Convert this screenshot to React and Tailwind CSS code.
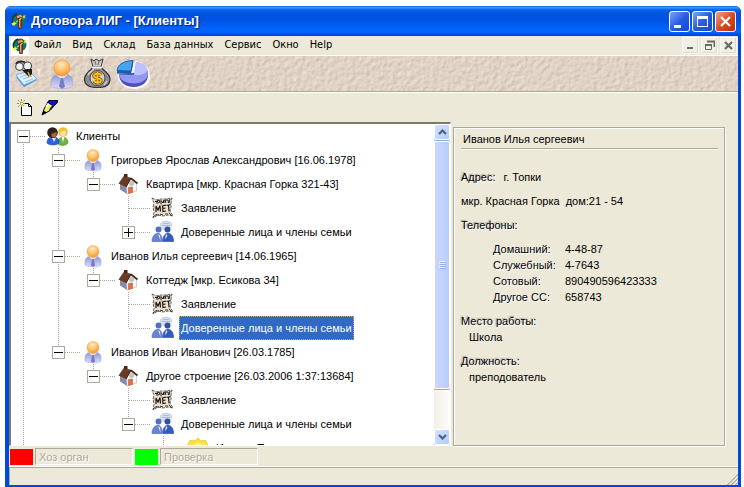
import clsx from "clsx"

const menuItems = ["Файл", "Вид", "Склад", "База данных", "Сервис", "Окно", "Help"]

const tree = [
  {
    id: "root",
    label: "Клиенты",
    icon: "clients",
    more: true,
    children: [
      {
        id: "c1",
        label: "Григорьев Ярослав Александрович [16.06.1978]",
        icon: "person",
        children: [
          {
            id: "c1-1",
            label: "Квартира [мкр. Красная Горка 321-43]",
            icon: "house",
            children: [
              { id: "c1-1-1", label: "Заявление", icon: "paper" },
              { id: "c1-1-2", label: "Доверенные лица и члены семьи", icon: "family", collapsed: true },
            ],
          },
        ],
      },
      {
        id: "c2",
        label: "Иванов Илья сергеевич [14.06.1965]",
        icon: "person",
        children: [
          {
            id: "c2-1",
            label: "Коттедж [мкр. Есикова 34]",
            icon: "house",
            children: [
              { id: "c2-1-1", label: "Заявление", icon: "paper" },
              { id: "c2-1-2", label: "Доверенные лица и члены семьи", icon: "family", selected: true },
            ],
          },
        ],
      },
      {
        id: "c3",
        label: "Иванов Иван Иванович [26.03.1785]",
        icon: "person",
        children: [
          {
            id: "c3-1",
            label: "Другое строение [26.03.2006 1:37:13684]",
            icon: "house",
            children: [
              { id: "c3-1-1", label: "Заявление", icon: "paper" },
              {
                id: "c3-1-2",
                label: "Доверенные лица и члены семьи",
                icon: "family",
                children: [{ id: "c3-1-2-1", label: "Иванов Петр", icon: "star" }],
              },
            ],
          },
        ],
      },
    ],
  },
]

const phones = [
  ["Домашний:", "4-48-87"],
  ["Служебный:", "4-7643"],
  ["Сотовый:", "890490596423333"],
  ["Другое СС:", "658743"],
]

/* ---------- icons ---------- */

function AppIcon() {
  return (
    <svg width="16" height="16" viewBox="0 0 16 16">
      <circle cx="8" cy="7" r="6.500" fill="#0b7a68" />
      <path d="M2 10 A6.500 6.500 0 0 1 6 1" stroke="#043c34" strokeWidth="1.500" fill="none" />
      <path d="M5 3 L10 1 L12 4 L6 6 Z" fill="#d9a07a" stroke="#4a2410" strokeWidth=".7" />
      <path d="M7.500 5h3v10.500h-3z" fill="#c0522c" stroke="#4a1c0c" strokeWidth=".7" />
      <path d="M8.500 6v8" stroke="#f2b08c" strokeWidth=".8" />
      <path d="M1 12 L15 2" stroke="#ffe93c" strokeWidth="1" strokeDasharray="3 1.500" />
      <path d="M3 8l1 2 2 .5-2 1-1 2-.8-2-2-1 2-.5z" fill="#fff04a" />
      <path d="M13 2l.6 1.500 1.600.5-1.600.6-.6 1.500-.6-1.500-1.500-.6 1.500-.5z" fill="#c8f04a" />
    </svg>
  )
}

function PersonIcon({ size = 24 }) {
  return (
    <svg width={size} height={size} viewBox="0 0 24 24">
      <defs>
        <radialGradient id="head" cx="45%" cy="28%" r="75%">
          <stop offset="0" stopColor="#ffe9c4" />
          <stop offset=".55" stopColor="#ffbe66" />
          <stop offset="1" stopColor="#f5942c" />
        </radialGradient>
        <linearGradient id="body" x1="0" y1="0" x2="0" y2="1">
          <stop offset="0" stopColor="#8d94cc" />
          <stop offset="1" stopColor="#dadef6" />
        </linearGradient>
      </defs>
      <path d="M4 21 C3 14 6 12 12 12 C18 12 21 14 20 21 C18 23.500 6 23.500 4 21Z" fill="url(#body)" stroke="#a4aade" strokeWidth=".5" />
      <path d="M8 13l4 3 4-3-1-1H9z" fill="#e2e5fb" />
      <path d="M11.200 15h1.600l1.400 6.500L12 23 9.800 21.500z" fill="#737cc4" />
      <circle cx="12" cy="7.500" r="6" fill="url(#head)" stroke="#ee9a3a" strokeWidth=".5" />
    </svg>
  )
}

function HouseIcon() {
  return (
    <svg width="24" height="24" viewBox="0 0 24 24">
      <path d="M4 11 L11 14 L11 22 L4 17.500Z" fill="#858cab" />
      <path d="M10.500 14 L15.500 7 L20.500 11.500 L20.500 19 L11 22Z" fill="#f4f5fb" stroke="#a7abc0" strokeWidth=".5" />
      <path d="M2.500 11.500 L8 3.500 L15 6 L10 15Z" fill="#6b3a22" />
      <path d="M8 2h3.500v3H8z" fill="#4f2512" />
      <path d="M14.500 6 L21.500 11.500" stroke="#4f2512" strokeWidth="1.600" />
      <path d="M15 6 L10 15" stroke="#3d1b0c" strokeWidth="1" />
      <circle cx="15.500" cy="11.500" r="2" fill="#b9d3b0" stroke="#8893a8" strokeWidth=".5" />
      <path d="M12.500 15.500l4-.5v5.500l-4 1z" fill="#e2703a" stroke="#b34c1e" strokeWidth=".5" />
    </svg>
  )
}

function PaperIcon() {
  return (
    <svg width="24" height="24" viewBox="0 0 24 24">
      <path d="M1 2l4 2 5-1 5 0 6-1-1 5 0 4-1 4 3 5-5-1-5 1-5-1-5 3 1-6-1-5 1-4z" fill="#ece2d2" stroke="#2a2620" strokeWidth=".7" strokeDasharray="3 1" />
      <path d="M4 5.500h3M6 8V5l2-1 1 2-2 1M10 8V4.500l2 2.500 1-3v3M15 7l-1-3 3 0 .5 3M19 3l-1 4" stroke="#1a1714" strokeWidth="1" fill="none" />
      <path d="M5 16l0-6 2 4 2-4.500.5 6M15 9l-3.500 1 .5 5.500 3-.5M11.500 12.500l3-.5M15.500 9.500l4-1M17.500 9l.5 6" stroke="#1a1714" strokeWidth="1.200" fill="none" />
      <path d="M2 21l4-3M5 19h3M9 18l3 1M14 18h3M18 17l3 3" stroke="#3a342a" strokeWidth="1" />
      <path d="M3 10v3M9 9h3M17 16h2" stroke="#b79a80" strokeWidth="1.200" />
    </svg>
  )
}

function FamilyIcon() {
  return (
    <svg width="24" height="24" viewBox="0 0 24 24">
      <ellipse cx="15" cy="5" rx="6" ry="3.800" fill="#d8e2ee" stroke="#b2c2d4" strokeWidth=".7" />
      <path d="M13 8l-2 3 5-2.500z" fill="#cfdcec" />
      <path d="M12 3.500h6M11 5.500h8" stroke="#9fb4cc" strokeWidth=".8" />
      <path d="M1 21.500 C1 17 3 14 7 13 C10 14 11.500 17 11.500 21.500Z" fill="#6684cf" stroke="#4764b4" strokeWidth=".6" />
      <path d="M12 21.500 C12 17 13 14 17 13 C21 14 22.500 17 22.500 21.500Z" fill="#3459c0" stroke="#2344a0" strokeWidth=".6" />
      <path d="M7 14l2 1.500.5 5zM15 14l-1 5.500 2.500-4z" fill="#e8eefc" />
      <circle cx="7.500" cy="9.500" r="3" fill="#5271bf" />
      <circle cx="16.500" cy="9.500" r="3" fill="#31529f" />
    </svg>
  )
}

function ClientsIcon() {
  return (
    <svg width="24" height="24" viewBox="0 0 24 24">
      <path d="M12 20c0-5 2-7 5-7s5 3 5 6c-2 3-8 3-10 1z" fill="#6db53c" stroke="#4c8a24" strokeWidth=".6" />
      <path d="M15.500 13l1.500 5 1.500-5z" fill="#fff" />
      <circle cx="17" cy="8" r="4.800" fill="#efc235" />
      <path d="M14 8.500c2-1 4-2 6-1.500 0 3-1 5.500-2.500 5.500S14 11 14 8.500z" fill="#fbdcae" />
      <path d="M1 19c0-4 2-6 6-6s6.500 2 6 6c-2 2.500-10 2.500-12 0z" fill="#2f62dd" stroke="#173ea8" strokeWidth=".6" />
      <path d="M6 14l2 4 2-4z" fill="#dfe9ff" />
      <circle cx="6.500" cy="8.500" r="5.300" fill="#2c201c" />
      <path d="M5.500 9.500c2 0 4-1 4.500-2 1.500 3 .5 6-2 6S5 12 5.500 9.500z" fill="#b5602f" />
    </svg>
  )
}

function StarIcon() {
  return (
    <svg width="24" height="24" viewBox="0 0 24 24">
      <path d="M12 2l2.500 3 5-.5 2 4 2 3.500-3 3-1 5-5-1-2.500 3-3-3-5 1-1-5-3-3 2-3.500 2-4 5 .5z" fill="#ffe53a" stroke="#e8b91c" strokeWidth=".8" />
      <circle cx="12" cy="12" r="5" fill="#fff3a0" />
    </svg>
  )
}

const nodeIcons = {
  clients: ClientsIcon,
  person: PersonIcon,
  house: HouseIcon,
  paper: PaperIcon,
  family: FamilyIcon,
  star: StarIcon,
}

function ReportIcon() {
  return (
    <svg width="32" height="32" viewBox="0 0 32 32">
      <path d="M5 19l13-3 8 6-13 7z" fill="#3f92e2" />
      <path d="M5 17l13-4 8 8-13 6z" fill="#e2f2ff" stroke="#79b6ee" strokeWidth="1" />
      <path d="M9 19l9-3M12 21l9-3M14 24l8-3" stroke="#8ac2f0" strokeWidth="1" />
      <circle cx="8.500" cy="8.500" r="3.800" fill="#f2f4f5" stroke="#4a4a4a" strokeWidth="1.200" />
      <path d="M5 6c2-4 8-3 11 0" stroke="#2c2c2c" strokeWidth="1.600" fill="none" />
      <circle cx="16.500" cy="8" r="4" fill="#eceff0" stroke="#4c4c4c" strokeWidth="1.200" />
      <path d="M11 12l6-1 4 0 0 5-3 3-5-5z" fill="#1e1e1e" />
      <path d="M17 14l2 5" stroke="#e8ad2e" strokeWidth="1.500" />
      <path d="M26 12l2-1v6" stroke="#fff" strokeWidth="1" fill="none" />
    </svg>
  )
}

function MoneyIcon() {
  return (
    <svg width="32" height="32" viewBox="0 0 32 32">
      <path d="M10 1l3 2 2-2 3 2 4-2-2 8h-8z" fill="#c9c9c9" stroke="#3c3c3c" strokeWidth="1" />
      <path d="M14 3l1 4M18 3l-1 4" stroke="#555" strokeWidth=".8" />
      <path d="M12 9h8c1 3 9 6 9 12 0 6-4 8.500-12.500 8.500S3.500 27 3.500 21c0-6 7.500-9 8.500-12z" fill="#8d8d8d" stroke="#333" strokeWidth="1.200" />
      <path d="M7 17c1-3 4-4 6-6M26 23c-1 2-2 3-3 4" stroke="#d0d0d0" strokeWidth="1.500" fill="none" />
      <path d="M11 9.500h10" stroke="#f0f0f0" strokeWidth="2" />
      <circle cx="16.500" cy="20" r="7.500" fill="#d6d2c4" stroke="#444" strokeWidth="1" />
      <path d="M20 17c-1-2-7-2-7 .8s7 2 7 4.700-6 2.500-7 .5M16.500 13.500v13" stroke="#7a4a00" strokeWidth="3.400" fill="none" />
      <path d="M20 17c-1-2-7-2-7 .8s7 2 7 4.700-6 2.500-7 .5M16.500 14v12" stroke="#ffc21c" strokeWidth="1.800" fill="none" />
    </svg>
  )
}

function PieIcon() {
  return (
    <svg width="34" height="32" viewBox="0 0 34 32">
      <path d="M2 17c2 9 8 13 17 13s14-5 14-12-5-13-14-14" fill="#fff" stroke="#fff" strokeWidth="2" opacity=".8" />
      <path d="M3 16c0 9 7 13 15 13s14-5 14-12v-3z" fill="#4d52b4" />
      <path d="M18 17L20 4c8 1 12 6 12 11 0 6-6 10.500-14 10.500S3.500 22 3 16.500z" fill="#9298f2" />
      <path d="M18 17L20 4c7 1 10.500 4.500 11.500 8-3 5-8 5.500-13.500 5z" fill="#bcc1ff" />
      <path d="M1 12.500C2 6 8 3 17 2.500L15 13z" fill="#45a4f0" stroke="#1d5fae" strokeWidth="1" />
      <path d="M1 12.500l14 .5v3L1 15.500z" fill="#1b5cb0" />
      <path d="M15 13l2-10.500v4L15 16z" fill="#174f9c" />
    </svg>
  )
}

function NewIcon() {
  return (
    <svg width="16" height="18" viewBox="0 0 16 18">
      <path d="M4.500 4.500h7l3 3v9h-10z" fill="#fff" stroke="#000" />
      <path d="M11.500 4.500v3h3" fill="none" stroke="#000" />
      <path d="M0 0h8v8H0z" fill="#ece9d8" />
      <path d="M4.500 9v7" stroke="#000" />
      <path d="M4.500 0v8M0 4.500h9M1 1l6 6M8 1l-7 7" stroke="#8f8f50" strokeWidth="1" strokeDasharray="2 1" />
      <circle cx="4.500" cy="4.500" r="1" fill="#ffff60" />
    </svg>
  )
}

function EditIcon() {
  return (
    <svg width="18" height="18" viewBox="0 0 18 18">
      <path d="M8 1.500h8.500V3L9 11.500l-8 4.500L3.500 9z" fill="#f6f06c" stroke="#000" strokeWidth="1" />
      <path d="M8 1.500h8.500V3L13 7 6.500 3.500z" fill="#1414b0" stroke="#00004c" strokeWidth="1" />
      <path d="M7.500 4.500L5 8" stroke="#fff" strokeWidth="1.500" />
      <path d="M9.500 11L13 7l-1.500-1L8 10.500z" fill="#1a1a66" />
      <path d="M1 16l1.500-4.500 3.500 2z" fill="#000" />
    </svg>
  )
}

const toolbar = [
  { name: "Отчёты", Icon: ReportIcon },
  { name: "Клиенты", Icon: () => <PersonIcon size={32} /> },
  { name: "Платежи", Icon: MoneyIcon },
  { name: "Диаграмма", Icon: PieIcon },
]

/* ---------- window chrome ---------- */

function CaptionButton({ name, close, children }) {
  return (
    <button
      aria-label={name}
      className={clsx(
        "flex h-[21px] w-[21px] items-center justify-center rounded-[3px] border border-white",
        close
          ? "bg-linear-to-br from-[#f0a088] via-[#dd4a20] to-[#b8300a]"
          : "bg-linear-to-br from-[#7ea2f4] via-[#2a5be6] to-[#1a45c8]"
      )}
    >
      <svg width="19" height="19" viewBox="0 0 19 19" shapeRendering={close ? "auto" : "crispEdges"} stroke="#fff" fill="none">
        {children}
      </svg>
    </button>
  )
}

function ChildButton({ name, children }) {
  return (
    <button aria-label={name} className="flex h-[17px] w-[17px] items-center justify-center border border-[#f8f7f0] bg-[#f1f0e6] shadow-[inset_-1px_-1px_0_#dcdacb]">
      <svg width="11" height="11" viewBox="0 0 11 11" stroke="#6b6b60" fill="none">
        {children}
      </svg>
    </button>
  )
}

function TitleBar() {
  return (
    <header className="flex h-[30px] shrink-0 items-center gap-1 rounded-t-[6px] bg-[linear-gradient(#0a4fd8_0px,#3f97ff_1px,#2f8bf8_2px,#0a5fe8_4px,#0053e1_8px,#0054e6_15px,#0062fb_22px,#0066ff_26px,#0055e8_28px,#003dc4_30px)] pr-[5px] pl-1.5">
      <AppIcon />
      <h1 className="grow truncate font-['Liberation_Sans',Arial,sans-serif] text-[13px] font-bold text-white [text-shadow:1px_1px_1px_#0a1e78]">
        Договора ЛИГ - [Клиенты]
      </h1>
      <div className="flex gap-0.5">
        <CaptionButton name="Свернуть">
          <path d="M4 14h7" strokeWidth="3" />
        </CaptionButton>
        <CaptionButton name="Развернуть">
          <path d="M4 5.500h11" strokeWidth="3" />
          <path d="M4.500 5v9.500h10V5" />
        </CaptionButton>
        <CaptionButton name="Закрыть" close>
          <path d="M5 5l9 9M14 5l-9 9" strokeWidth="2.200" />
        </CaptionButton>
      </div>
    </header>
  )
}

function MenuBar() {
  return (
    <nav className="flex h-[19px] shrink-0 items-center bg-[#ece9d8] pl-0.5 font-['DejaVu_Sans_Condensed','DejaVu_Sans',sans-serif] text-[11px]">
      <span className="mr-[5px] flex h-[18px] w-[18px] items-center justify-center bg-white">
        <AppIcon />
      </span>
      <div className="flex grow gap-[11px]">
        {menuItems.map((item) => (
          <button key={item}>{item}</button>
        ))}
      </div>
      <div className="flex gap-0.5 pr-px">
        <ChildButton name="Свернуть окно">
          <path d="M2 8h6" strokeWidth="2" />
        </ChildButton>
        <ChildButton name="Восстановить окно">
          <path d="M3 1.500h7.500V7M1 5h7" strokeWidth="2" />
          <path d="M1.500 4v5.500h6V4" />
        </ChildButton>
        <ChildButton name="Закрыть окно">
          <path d="M2 2l7 7M9 2l-7 7" strokeWidth="2.200" />
        </ChildButton>
      </div>
    </nav>
  )
}

function StoneTexture() {
  return (
    <svg className="absolute inset-0 h-full w-full opacity-45" aria-hidden="true">
      <filter id="stone" x="0" y="0" width="100%" height="100%" colorInterpolationFilters="sRGB">
        <feTurbulence type="fractalNoise" baseFrequency="0.22" numOctaves="3" seed="4" result="n" />
        <feDiffuseLighting in="n" lightingColor="#e2d4c6" surfaceScale="0.700" diffuseConstant="1.200">
          <feDistantLight azimuth="225" elevation="56" />
        </feDiffuseLighting>
      </filter>
      <rect width="100%" height="100%" filter="url(#stone)" />
    </svg>
  )
}

/* ---------- tree ---------- */

// one 35px column of the tree: vertical guide (top / bottom half) and the branch to the icon
function Guide({ top, bottom, branch }) {
  return (
    <svg width="35" height="24" viewBox="0 0 35 24" className="shrink-0" shapeRendering="crispEdges" stroke="#aca899" strokeDasharray="1 1">
      {top && <path d="M12.500 0v12" />}
      {bottom && <path d="M12.500 12v12" />}
      {branch && <path d="M13 12.500h22" />}
    </svg>
  )
}

function TreeNode({ node, guides, last }) {
  const Icon = nodeIcons[node.icon]
  const depth = guides.length
  const hasBox = node.children || node.collapsed
  return (
    <li>
      <div className="flex h-6 items-center whitespace-nowrap">
        {guides.map((g, i) => (
          <Guide key={i} top={g} bottom={g} />
        ))}
        <div className="relative shrink-0">
          <Guide top={depth > 0} bottom={!last} branch />
          {hasBox && (
            <button
              aria-label={node.collapsed ? "Раскрыть" : "Скрыть"}
              className="absolute top-1.5 left-1.5 flex h-[13px] w-[13px] items-center justify-center border border-[#aca899] bg-white"
            >
              <svg width="9" height="9" viewBox="0 0 9 9" stroke="#000" shapeRendering="crispEdges">
                <path d={node.collapsed ? "M0 4.500h9M4.500 0v9" : "M0 4.500h9"} />
              </svg>
            </button>
          )}
        </div>
        <span className="shrink-0">
          <Icon />
        </span>
        <span
          className={clsx(
            "ml-1 h-6 px-0.5 leading-6",
            node.selected && "bg-[#316ac5] text-white outline-1 -outline-offset-1 outline-dotted outline-[#d9a441]"
          )}
        >
          {node.label}
        </span>
      </div>
      {node.children && (
        <ul>
          {node.children.map((child, i) => (
            <TreeNode key={child.id} node={child} guides={[...guides, !last]} last={i === node.children.length - 1} />
          ))}
        </ul>
      )}
    </li>
  )
}

function ScrollButton({ name, d }) {
  return (
    <button aria-label={name} className="flex h-4 w-4 shrink-0 items-center justify-center rounded-[2px] border border-white bg-linear-to-br from-[#d6e2fe] to-[#b4cbfb] shadow-[0_1px_0_#8aa8de]">
      <svg width="9" height="8" viewBox="0 0 9 8" fill="none" stroke="#4d6185" strokeWidth="2.200">
        <path d={d} />
      </svg>
    </button>
  )
}

function ScrollBar() {
  return (
    <div className="flex w-4 shrink-0 flex-col bg-linear-to-r from-[#f1efe7] to-[#fefefb]">
      <ScrollButton name="Вверх" d="M1 6l3.500-3.500L8 6" />
      <div className="mt-px flex grow-[6] items-center justify-center rounded-[2px] border border-white bg-linear-to-r from-[#c9d7fc] to-[#b9cdfb] shadow-[0_1px_0_#8aa8de,1px_0_0_#a9c0ee]">
        <svg width="7" height="8" viewBox="0 0 7 8" shapeRendering="crispEdges">
          <path d="M0 .5h6M0 2.500h6M0 4.500h6M0 6.500h6" stroke="#eef4fe" />
          <path d="M1 1.500h6M1 3.500h6M1 5.500h6M1 7.500h6" stroke="#8cb0f8" />
        </svg>
      </div>
      <div className="grow" />
      <ScrollButton name="Вниз" d="M1 2l3.500 3.500L8 2" />
    </div>
  )
}

function ClientTree() {
  return (
    <section className="flex min-w-0 flex-[439] overflow-hidden border-t-2 border-r border-b border-l-2 border-t-[#7d7a6c] border-r-white border-b-white border-l-[#7d7a6c] bg-white">
      <ul className="min-w-0 grow overflow-hidden">
        {tree.map((node) => (
          <TreeNode key={node.id} node={node} guides={[]} last={!node.more} />
        ))}
      </ul>
      <ScrollBar />
    </section>
  )
}

/* ---------- client card ---------- */

function Caption({ children }) {
  return <dt className="[text-shadow:1px_1px_0_#fff,-1px_-1px_1px_#aca899]">{children}</dt>
}

function ClientCard() {
  return (
    <section className="mt-[5px] mr-[13px] ml-0.5 min-w-0 flex-[257] border border-[#aca899] pt-[3px] pr-1.5 pl-[7px] leading-4 shadow-[inset_1px_1px_0_#fff,1px_1px_0_#fff]">
      <h2 className="border-b border-[#aca899] px-0.5 pb-px shadow-[0_1px_0_#fff]">Иванов Илья сергеевич</h2>
      <dl className="mt-5 flex flex-col gap-2">
        <div className="flex gap-2">
          <Caption>Адрес:</Caption>
          <dd>г. Топки</dd>
        </div>
        <dd className="whitespace-pre">мкр. Красная Горка  дом:21 - 54</dd>
        <Caption>Телефоны:</Caption>
        <dd>
          <table className="ml-8">
            <tbody>
              {phones.map(([kind, number]) => (
                <tr key={kind}>
                  <th scope="row" className="w-[72px] p-0 text-left font-normal [text-shadow:1px_1px_0_#fff]">{kind}</th>
                  <td className="p-0">{number}</td>
                </tr>
              ))}
            </tbody>
          </table>
        </dd>
        <div>
          <Caption>Место работы:</Caption>
          <dd className="ml-2">Школа</dd>
        </div>
        <div>
          <Caption>Должность:</Caption>
          <dd className="ml-2">преподователь</dd>
        </div>
      </dl>
    </section>
  )
}

/* ---------- bottom ---------- */

function LegendField({ id, label, swatch }) {
  return (
    <div className="flex items-center gap-0.5">
      <label htmlFor={id} aria-label={label} className={clsx("h-4 w-[23px]", swatch)} />
      <input
        id={id}
        disabled
        defaultValue={label}
        className="h-[17px] w-[98px] border border-t-[#aca899] border-r-white border-b-white border-l-[#aca899] px-[3px] text-[11px] text-[#aca899] [text-shadow:1px_1px_0_#fff]"
      />
    </div>
  )
}

function StatusBar() {
  return (
    <footer className="flex h-[18px] shrink-0 items-end justify-end border-t border-l border-[#aca899] shadow-[0_-1px_0_#fff]">
      <svg width="12" height="12" viewBox="0 0 12 12" stroke="#aca899" strokeWidth="1.500">
        <path d="M1 12L12 1M5 12l7-7M9 12l3-3" />
        <path d="M0 12L12 0M4 12l8-8M8 12l4-4" stroke="#fff" strokeWidth=".7" />
      </svg>
    </footer>
  )
}

function App() {
  return (
    <div className="h-screen bg-white pt-1.5 pr-[3px] pl-[5px] font-['Liberation_Sans',Arial,sans-serif] text-[11px] text-black">
      <div className="flex h-full flex-col rounded-t-[6px] bg-[#0046e0]">
        <TitleBar />
        <div className="mr-[3px] mb-0.5 ml-1 flex min-h-0 grow flex-col bg-[#ece9d8]">
          <MenuBar />

          {/* main toolbar */}
          <div className="relative h-[37px] shrink-0 border-t border-b border-t-white border-b-[#aca899] bg-[#e0d2c4]">
            <StoneTexture />
            <div className="relative flex h-full items-center gap-[3px] pl-0.5">
              {toolbar.map(({ name, Icon }) => (
                <button key={name} aria-label={name}>
                  <Icon />
                </button>
              ))}
            </div>
          </div>

          {/* edit toolbar */}
          <div className="flex h-[30px] shrink-0 items-center gap-2 border-t border-white pl-2">
            <button aria-label="Создать">
              <NewIcon />
            </button>
            <button aria-label="Изменить">
              <EditIcon />
            </button>
          </div>

          <main className="flex min-h-0 grow">
            <ClientTree />
            <ClientCard />
          </main>

          <div className="flex h-[21px] shrink-0 items-center gap-0.5 pl-px">
            <LegendField id="org" label="Хоз орган" swatch="bg-[#ff0000]" />
            <LegendField id="check" label="Проверка" swatch="bg-[#00ff00]" />
          </div>
          <StatusBar />
        </div>
      </div>
    </div>
  )
}

export default App
